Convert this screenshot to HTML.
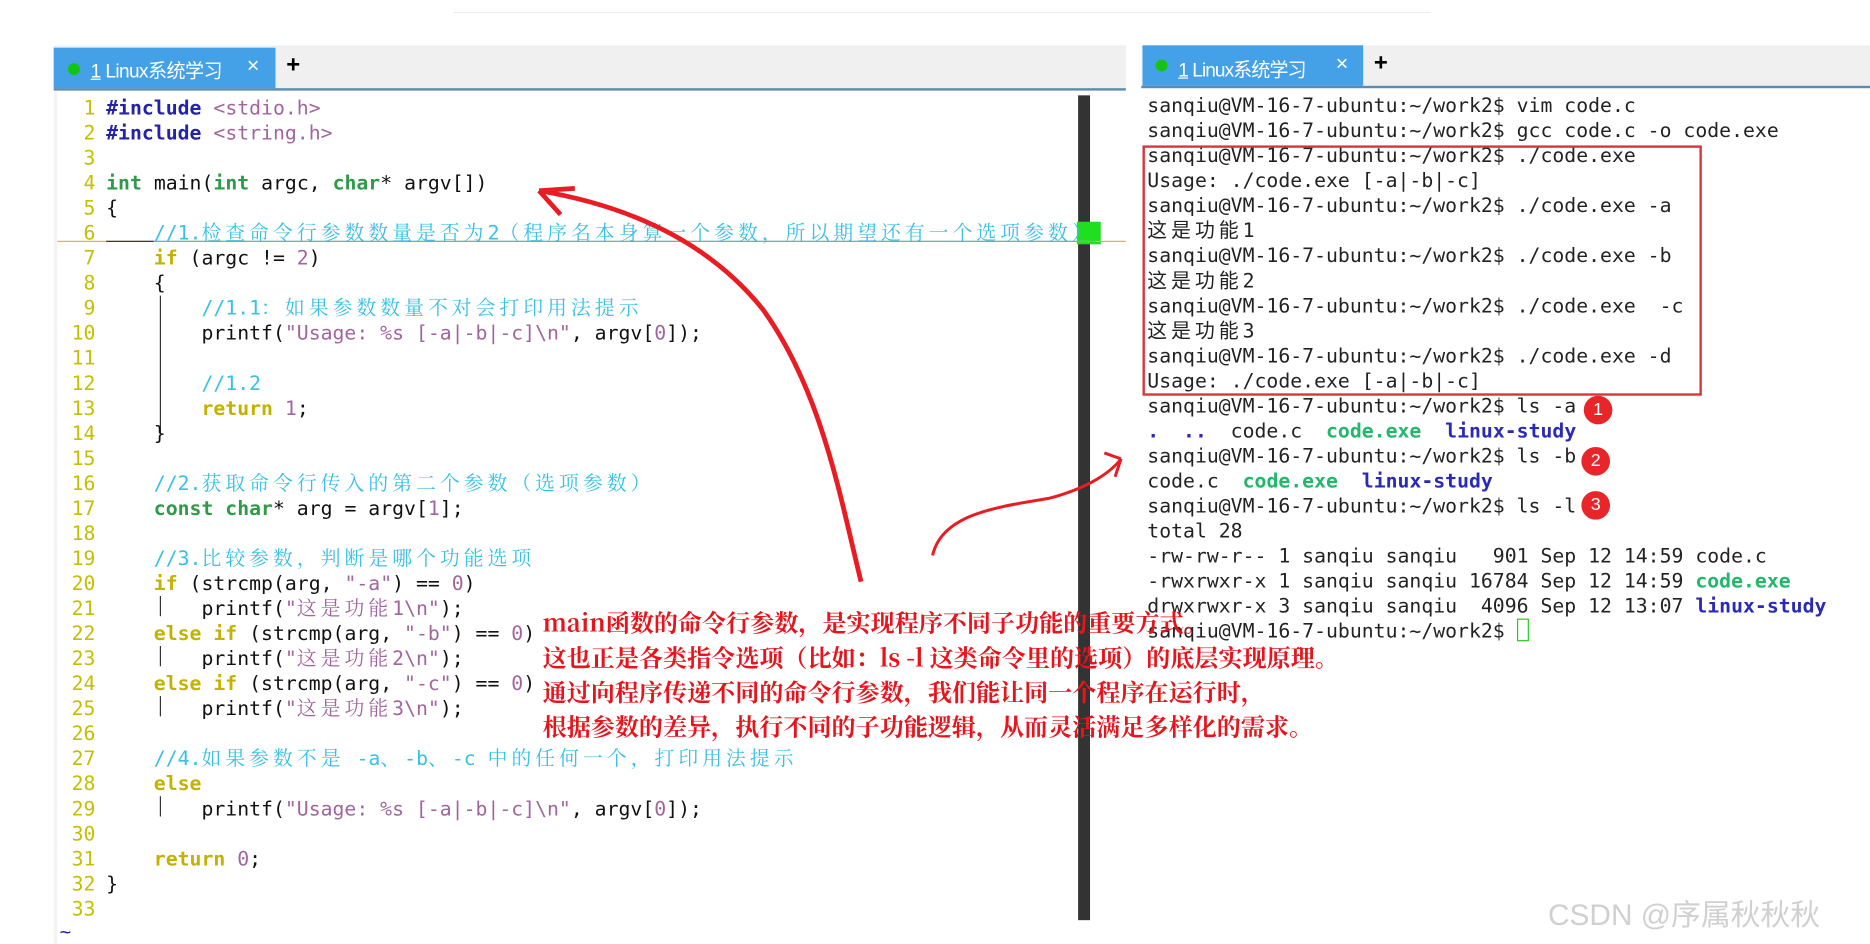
<!DOCTYPE html>
<html><head><meta charset="utf-8"><style>
html,body{margin:0;padding:0;width:1870px;height:944px;overflow:hidden;background:#fff}
#s{position:absolute;left:0;top:0;width:1568px;height:792px;transform:scale(1.19260,1.19192);transform-origin:0 0}
.mono{font-family:"DejaVu Sans Mono","Liberation Mono","Noto Sans CJK SC",monospace;font-size:16.6px;white-space:pre;line-height:21px}
.z{letter-spacing:3.4px;font-family:"Noto Serif CJK SC",serif;line-height:0}
.zs{letter-spacing:3.4px;font-family:"Noto Sans CJK SC",sans-serif;line-height:0}
.ln{position:absolute;left:48px;width:32px;text-align:right;color:#c3c000}
.cl{position:absolute;left:89px;color:#111}
.k{color:#2323a8;font-weight:bold}.s{color:#a2649e}.t{color:#2e9a4a;font-weight:bold}.y{color:#c3b300;font-weight:bold}.c{color:#38c0e6}.n{color:#a2649e}
.tl{position:absolute;left:962px;color:#222}
.g{color:#22b86a;font-weight:bold}.b{color:#2a2ab8;font-weight:bold}
.red{position:absolute;left:455px;color:#e8141c;font-family:"Noto Serif CJK SC","Liberation Serif",serif;font-weight:bold;font-size:20.2px;white-space:pre;line-height:29px}
.num{position:absolute;width:24px;height:24px;border-radius:50%;background:#e8262a;color:#fff;font:15px "Liberation Sans",sans-serif;text-align:center;line-height:24px}
</style></head><body><div id="s">
<div style="position:absolute;left:380px;top:10px;width:820px;height:1px;background:#eee"></div>
<div style="position:absolute;left:45px;top:38px;width:899px;height:36px;background:#f0f0f0;border-bottom:2px solid #5b8bb0"></div>
<div style="position:absolute;left:45px;top:40px;width:186px;height:34px;background:#44a1e8"></div>
<div style="position:absolute;left:57px;top:53px;width:10px;height:10px;border-radius:50%;background:#14c414"></div>
<div style="position:absolute;left:76px;top:46px;font:16px 'Liberation Sans','Noto Sans CJK SC',sans-serif;color:#fff;letter-spacing:-0.5px"><u>1</u> Linux系统学习</div>
<div style="position:absolute;left:207px;top:45px;font:18px 'Liberation Sans',sans-serif;color:#fff">×</div>
<div style="position:absolute;left:240px;top:44px;font:bold 20px 'Liberation Sans',sans-serif;color:#000">+</div>
<div style="position:absolute;left:45px;top:76px;width:3px;height:716px;background:#f4f4f4"></div>
<div style="position:absolute;left:904px;top:80px;width:10px;height:692px;background:#333"></div>
<div style="position:absolute;left:903px;top:186px;width:20px;height:19px;background:#1ee01e"></div>
<div style="position:absolute;left:48px;top:202px;width:896px;height:1px;background:#d8b93a"></div>
<div style="position:absolute;left:89px;top:202px;width:40px;height:1px;background:#333"></div>
<div style="position:absolute;left:134px;top:248px;width:1px;height:115px;background:#333"></div>
<div style="position:absolute;left:134px;top:500px;width:1px;height:17px;background:#333"></div>
<div style="position:absolute;left:134px;top:542px;width:1px;height:17px;background:#333"></div>
<div style="position:absolute;left:134px;top:584px;width:1px;height:17px;background:#333"></div>
<div style="position:absolute;left:134px;top:668px;width:1px;height:17px;background:#333"></div>
<div class="mono" style="position:absolute;top:80px;left:0">
<div class="ln" style="top:0">1
2
3
4
5
6
7
8
9
10
11
12
13
14
15
16
17
18
19
20
21
22
23
24
25
26
27
28
29
30
31
32
33</div>
<div class="cl" style="top:0"><span class="k">#include</span> <span class="s">&lt;stdio.h&gt;</span>
<span class="k">#include</span> <span class="s">&lt;string.h&gt;</span>

<span class="t">int</span> main(<span class="t">int</span> argc, <span class="t">char</span>* argv[])
{
    <span class="c" style="text-decoration:underline">//1.<span class="z">检查命令行参数数量是否为</span>2<span class="z">（程序名本身算一个参数，所以期望还有一个选项参数）</span></span>
    <span class="y">if</span> (argc != <span class="n">2</span>)
    {
        <span class="c">//1.1<span class="z">：如果参数数量不对会打印用法提示</span></span>
        printf(<span class="s">"Usage: %s [-a|-b|-c]\n"</span>, argv[<span class="n">0</span>]);

        <span class="c">//1.2</span>
        <span class="y">return</span> <span class="n">1</span>;
    }

    <span class="c">//2.<span class="z">获取命令行传入的第二个参数（选项参数）</span></span>
    <span class="t">const</span> <span class="t">char</span>* arg = argv[<span class="n">1</span>];

    <span class="c">//3.<span class="z">比较参数，判断是哪个功能选项</span></span>
    <span class="y">if</span> (strcmp(arg, <span class="s">"-a"</span>) == <span class="n">0</span>)
        printf(<span class="s">"<span class="z">这是功能</span>1\n"</span>);
    <span class="y">else if</span> (strcmp(arg, <span class="s">"-b"</span>) == <span class="n">0</span>)
        printf(<span class="s">"<span class="z">这是功能</span>2\n"</span>);
    <span class="y">else if</span> (strcmp(arg, <span class="s">"-c"</span>) == <span class="n">0</span>)
        printf(<span class="s">"<span class="z">这是功能</span>3\n"</span>);

    <span class="c">//4.<span class="z">如果参数不是</span> -a<span class="z">、</span>-b<span class="z">、</span>-c <span class="z">中的任何一个，打印用法提示</span></span>
    <span class="y">else</span>
        printf(<span class="s">"Usage: %s [-a|-b|-c]\n"</span>, argv[<span class="n">0</span>]);

    <span class="y">return</span> <span class="n">0</span>;
}
</div>
</div>
<div style="position:absolute;left:50px;top:772px;color:#2323a8;font:16px 'DejaVu Sans Mono',monospace">~</div>
<div style="position:absolute;left:957px;top:38px;width:611px;height:34px;background:#f0f0f0;border-bottom:2px solid #5b8bb0"></div>
<div style="position:absolute;left:958px;top:38px;width:185px;height:34px;background:#44a1e8"></div>
<div style="position:absolute;left:969px;top:50px;width:10px;height:10px;border-radius:50%;background:#14c414"></div>
<div style="position:absolute;left:988px;top:45px;font:16px 'Liberation Sans','Noto Sans CJK SC',sans-serif;color:#fff;letter-spacing:-0.8px"><u>1</u> Linux系统学习</div>
<div style="position:absolute;left:1120px;top:43px;font:18px 'Liberation Sans',sans-serif;color:#fff">×</div>
<div style="position:absolute;left:1152px;top:42px;font:bold 20px 'Liberation Sans',sans-serif;color:#000">+</div>
<div class="mono tl" style="top:78px">sanqiu@VM-16-7-ubuntu:~/work2$ vim code.c
sanqiu@VM-16-7-ubuntu:~/work2$ gcc code.c -o code.exe
sanqiu@VM-16-7-ubuntu:~/work2$ ./code.exe
Usage: ./code.exe [-a|-b|-c]
sanqiu@VM-16-7-ubuntu:~/work2$ ./code.exe -a
<span class="zs">这是功能</span>1
sanqiu@VM-16-7-ubuntu:~/work2$ ./code.exe -b
<span class="zs">这是功能</span>2
sanqiu@VM-16-7-ubuntu:~/work2$ ./code.exe  -c
<span class="zs">这是功能</span>3
sanqiu@VM-16-7-ubuntu:~/work2$ ./code.exe -d
Usage: ./code.exe [-a|-b|-c]
sanqiu@VM-16-7-ubuntu:~/work2$ ls -a
<span class="b">.  ..</span>  code.c  <span class="g">code.exe</span>  <span class="b">linux-study</span>
sanqiu@VM-16-7-ubuntu:~/work2$ ls -b
code.c  <span class="g">code.exe</span>  <span class="b">linux-study</span>
sanqiu@VM-16-7-ubuntu:~/work2$ ls -l
total 28
-rw-rw-r-- 1 sanqiu sanqiu   901 Sep 12 14:59 code.c
-rwxrwxr-x 1 sanqiu sanqiu 16784 Sep 12 14:59 <span class="g">code.exe</span>
drwxrwxr-x 3 sanqiu sanqiu  4096 Sep 12 13:07 <span class="b">linux-study</span>
sanqiu@VM-16-7-ubuntu:~/work2$ <span style="display:inline-block;width:8px;height:17px;border:1px solid #2c2;vertical-align:-3px"></span></div>
<div style="position:absolute;left:958px;top:122px;width:465px;height:206px;border:2px solid #d9343a"></div>
<div class="num" style="left:1328px;top:332px">1</div>
<div class="num" style="left:1326px;top:375px">2</div>
<div class="num" style="left:1326px;top:412px">3</div>
<svg style="position:absolute;left:0;top:0" width="1568" height="792">
<path d="M722,488 C705,420 690,330 640,260 C600,210 540,175 452,160" stroke="#e81c22" stroke-width="4" fill="none"/>
<path d="M452,160 L482,158 M452,160 L470,180" stroke="#e81c22" stroke-width="4" fill="none"/>
<path d="M782,466 C790,430 840,425 880,418 C910,410 930,398 940,385" stroke="#e81c22" stroke-width="2.5" fill="none"/>
<path d="M940,385 L926,380 M940,385 L935,400" stroke="#e81c22" stroke-width="2.5" fill="none"/>
</svg>
<div class="red" style="top:507px">main函数的命令行参数，是实现程序不同子功能的重要方式。
这也正是各类指令选项（比如：ls -l 这类命令里的选项）的底层实现原理。
通过向程序传递不同的命令行参数，我们能让同一个程序在运行时，
根据参数的差异，执行不同的子功能逻辑，从而灵活满足多样化的需求。</div>
<div style="position:absolute;left:1298px;top:748px;font:25px 'Liberation Sans','Noto Sans CJK SC',sans-serif;color:#d0d0d0">CSDN @序属秋秋秋</div>
</div></body></html>
